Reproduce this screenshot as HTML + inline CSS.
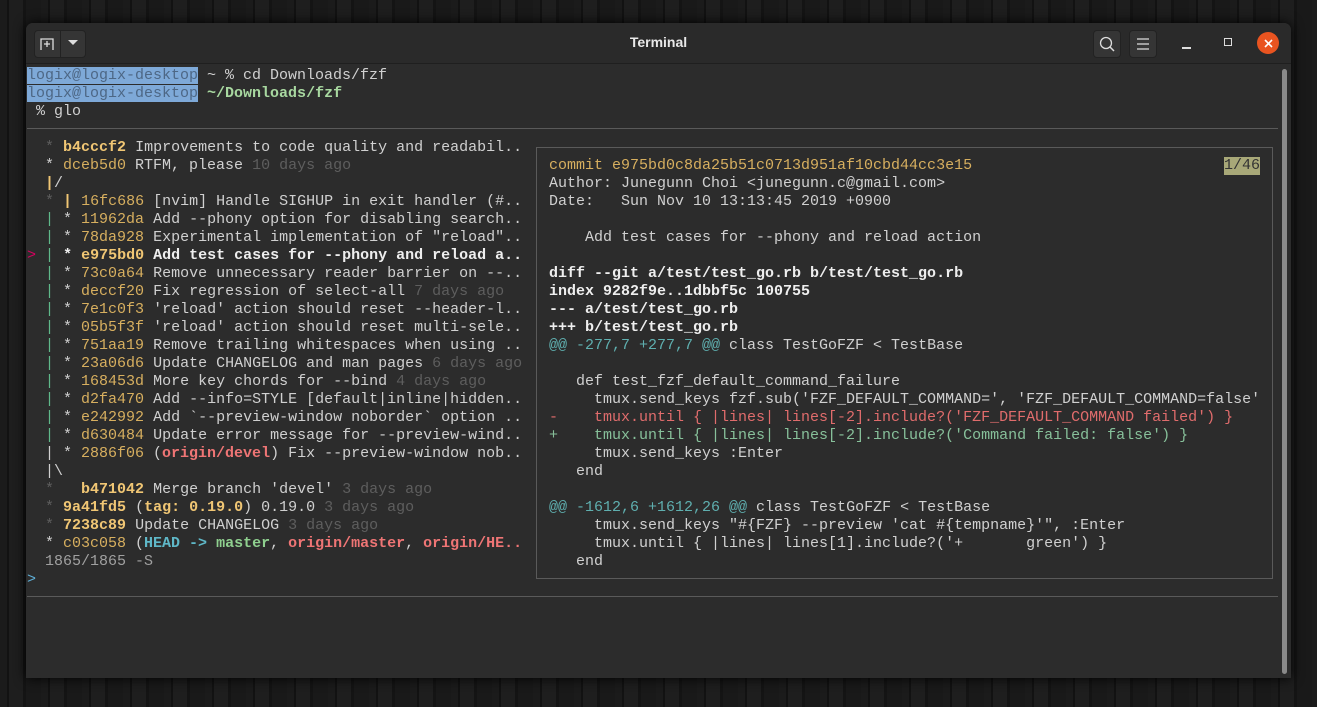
<!DOCTYPE html>
<html><head><meta charset="utf-8"><style>
*{margin:0;padding:0;box-sizing:border-box}
body{width:1317px;height:707px;overflow:hidden;background:#161616;
background-image:repeating-linear-gradient(90deg,#1b1b1b 0 7px,#121212 7px 9px,#1e1e1e 9px 23px,#141414 23px 26px,#191919 26px 41px);
font-family:"Liberation Mono",monospace;position:relative}
.win{position:absolute;left:26px;top:23px;width:1265px;height:655px;background:#2c2c2c;border-radius:7px 7px 0 0;box-shadow:0 0 12px #000}
.tb{position:absolute;left:0;top:0;width:1265px;height:41px;background:#2a2a2a;border-bottom:1px solid #1f1f1f;border-radius:7px 7px 0 0}
.title{position:absolute;left:0;width:100%;top:11px;text-align:center;font:bold 14px "Liberation Sans",sans-serif;color:#e8e8e8}
.btn{position:absolute;top:7px;height:28px;background:#353535;border:1px solid #222;border-radius:4px}
.l{position:absolute;white-space:pre;font-size:15px;line-height:18px;color:#d0d0d0}
.y{color:#d7af5f}.yb{color:#f0c674;font-weight:bold}.g{color:#5e5e5e}.gr{color:#5fb88a}.b{font-weight:bold;color:#eee}
.r{color:#e06c6c}.rb{color:#ef7575;font-weight:bold}.c{color:#5fafaf}.cb{color:#5fb8c8;font-weight:bold}.gb{color:#8fd08f;font-weight:bold}
.sel{background:#7ea9d8;color:#4d6785}
.hr{position:absolute;left:27px;width:1251px;height:1px;background:#5a5a5a}
</style></head><body>
<div class="win">
 <div class="tb">
  <div class="btn" style="left:8px;width:52px"></div>
  <div style="position:absolute;left:34px;top:8px;width:1px;height:27px;background:#222"></div>
  <svg style="position:absolute;left:13px;top:13px" width="16" height="16"><path d="M2 14V3h12v11M8 5v6M5 8h6" stroke="#ddd" stroke-width="1.3" fill="none"/></svg>
  <svg style="position:absolute;left:42px;top:17px" width="10" height="6"><path d="M0 0h10L5 5z" fill="#ddd"/></svg>
  <div class="title">Terminal</div>
  <div class="btn" style="left:1067px;width:28px"></div>
  <svg style="position:absolute;left:1073px;top:13px" width="17" height="17"><circle cx="7" cy="7" r="5.5" stroke="#ddd" stroke-width="1.3" fill="none"/><path d="M11 11l4 4" stroke="#ddd" stroke-width="1.5"/></svg>
  <div class="btn" style="left:1103px;width:28px"></div>
  <svg style="position:absolute;left:1110px;top:14px" width="14" height="14"><path d="M1 2h12M1 7h12M1 12h12" stroke="#ddd" stroke-width="1.2"/></svg>
  <div style="position:absolute;left:1156px;top:24px;width:9px;height:1.5px;background:#ddd"></div>
  <div style="position:absolute;left:1198px;top:15px;width:8px;height:8px;border:1.5px solid #ddd"></div>
  <div style="position:absolute;left:1231px;top:9px;width:22px;height:22px;border-radius:50%;background:#e95420"></div>
  <svg style="position:absolute;left:1237px;top:15px" width="11" height="11"><path d="M2 2l7 7M9 2l-7 7" stroke="#fff" stroke-width="1.6"/></svg>
 </div>
 <div style="position:absolute;left:1256px;top:46px;width:5px;height:605px;background:#8a8a8a;border-radius:3px"></div>
</div>

<div class="l" style="left:27px;top:67px"><span class="sel">logix@logix-desktop</span> ~ % cd Downloads/fzf</div>
<div class="l" style="left:27px;top:85px"><span class="sel">logix@logix-desktop</span> <b style="color:#a8d8a0">~/Downloads/fzf</b></div>
<div class="l" style="left:27px;top:103px"> % glo</div>
<div class="hr" style="top:128px"></div>
<div class="hr" style="top:596px"></div>

<div class="l" style="left:27px;top:139px">  <span class="g">*</span> <span class="yb">b4cccf2</span> Improvements to code quality and readabil..
  * <span class="y">dceb5d0</span> RTFM, please <span class="g">10 days ago</span>
  <span class="yb">|</span>/
  <span class="g">*</span> <span class="yb">|</span> <span class="y">16fc686</span> [nvim] Handle SIGHUP in exit handler (#..
  <span class="gr">|</span> * <span class="y">11962da</span> Add --phony option for disabling search..
  <span class="gr">|</span> * <span class="y">78da928</span> Experimental implementation of "reload"..
<span style="color:#d7005f">&gt;</span> <span class="gr">|</span> <b class="b">*</b> <span class="yb">e975bd0</span> <b class="b">Add test cases for --phony and reload a..</b>
  <span class="gr">|</span> * <span class="y">73c0a64</span> Remove unnecessary reader barrier on --..
  <span class="gr">|</span> * <span class="y">deccf20</span> Fix regression of select-all <span class="g">7 days ago</span>
  <span class="gr">|</span> * <span class="y">7e1c0f3</span> 'reload' action should reset --header-l..
  <span class="gr">|</span> * <span class="y">05b5f3f</span> 'reload' action should reset multi-sele..
  <span class="gr">|</span> * <span class="y">751aa19</span> Remove trailing whitespaces when using ..
  <span class="gr">|</span> * <span class="y">23a06d6</span> Update CHANGELOG and man pages <span class="g">6 days ago</span>
  <span class="gr">|</span> * <span class="y">168453d</span> More key chords for --bind <span class="g">4 days ago</span>
  <span class="gr">|</span> * <span class="y">d2fa470</span> Add --info=STYLE [default|inline|hidden..
  <span class="gr">|</span> * <span class="y">e242992</span> Add `--preview-window noborder` option ..
  <span class="gr">|</span> * <span class="y">d630484</span> Update error message for --preview-wind..
  | * <span class="y">2886f06</span> (<span class="rb">origin/devel</span>) Fix --preview-window nob..
  |\
  <span class="g">*</span>   <span class="yb">b471042</span> Merge branch 'devel' <span class="g">3 days ago</span>
  <span class="g">*</span> <span class="yb">9a41fd5</span> (<span class="yb">tag: 0.19.0</span>) 0.19.0 <span class="g">3 days ago</span>
  <span class="g">*</span> <span class="yb">7238c89</span> Update CHANGELOG <span class="g">3 days ago</span>
  * <span class="y">c03c058</span> (<span class="cb">HEAD -&gt;</span> <span class="gb">master</span>, <span class="rb">origin/master</span>, <span class="rb">origin/HE..</span>
  <span style="color:#a0a0a0">1865/1865 -S</span>
<span style="color:#5fafd7">&gt;</span></div>

<div style="position:absolute;left:536px;top:147px;width:737px;height:432px;border:1px solid #5a5a5a"></div>
<div class="l" style="left:1224px;top:157px;background:#a8a878;color:#333">1/46</div>
<div class="l" style="left:549px;top:157px"><span class="y">commit e975bd0c8da25b51c0713d951af10cbd44cc3e15</span>
Author: Junegunn Choi &lt;junegunn.c@gmail.com&gt;
Date:   Sun Nov 10 13:13:45 2019 +0900

    Add test cases for --phony and reload action

<b class="b">diff --git a/test/test_go.rb b/test/test_go.rb</b>
<b class="b">index 9282f9e..1dbbf5c 100755</b>
<b class="b">--- a/test/test_go.rb</b>
<b class="b">+++ b/test/test_go.rb</b>
<span class="c">@@ -277,7 +277,7 @@</span> class TestGoFZF &lt; TestBase

   def test_fzf_default_command_failure
     tmux.send_keys fzf.sub('FZF_DEFAULT_COMMAND=', 'FZF_DEFAULT_COMMAND=false'
<span class="r">-    tmux.until { |lines| lines[-2].include?('FZF_DEFAULT_COMMAND failed') }</span>
<span style="color:#87c09a">+    tmux.until { |lines| lines[-2].include?('Command failed: false') }</span>
     tmux.send_keys :Enter
   end

<span class="c">@@ -1612,6 +1612,26 @@</span> class TestGoFZF &lt; TestBase
     tmux.send_keys "#{FZF} --preview 'cat #{tempname}'", :Enter
     tmux.until { |lines| lines[1].include?('+       green') }
   end</div>
</body></html>
